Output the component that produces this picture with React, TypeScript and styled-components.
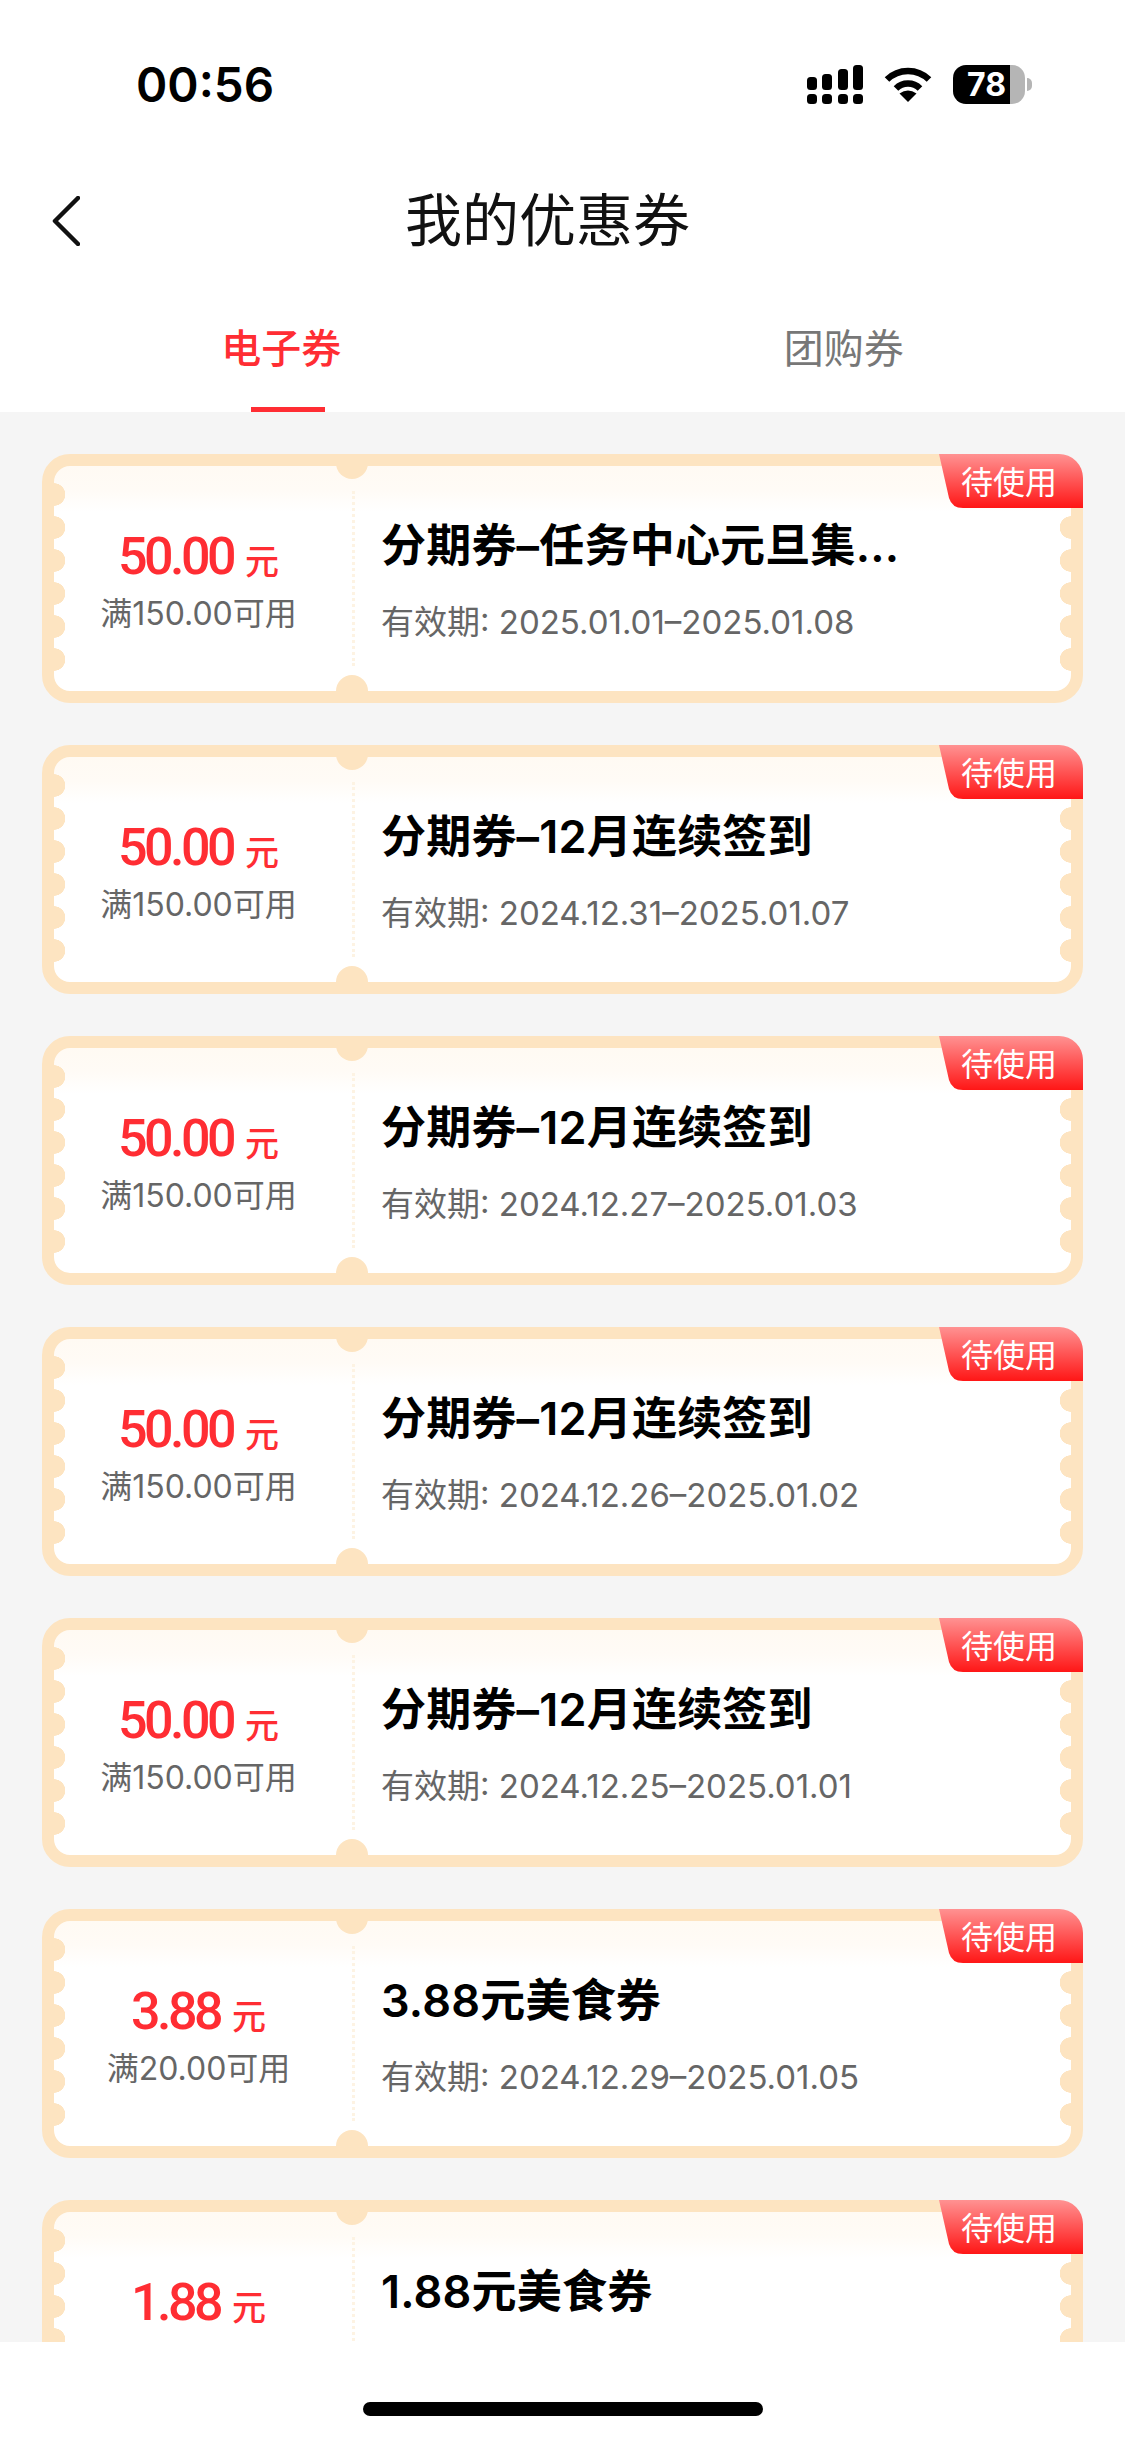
import React from 'react';
import styled, { createGlobalStyle } from 'styled-components';

interface Coupon {
  price: string;
  limit?: string;
  title: string;
  date?: string;
}

const coupons: Coupon[] = [
  { price: '50.00', limit: '满150.00可用', title: '分期券–任务中心元旦集...', date: '有效期: 2025.01.01–2025.01.08' },
  { price: '50.00', limit: '满150.00可用', title: '分期券–12月连续签到', date: '有效期: 2024.12.31–2025.01.07' },
  { price: '50.00', limit: '满150.00可用', title: '分期券–12月连续签到', date: '有效期: 2024.12.27–2025.01.03' },
  { price: '50.00', limit: '满150.00可用', title: '分期券–12月连续签到', date: '有效期: 2024.12.26–2025.01.02' },
  { price: '50.00', limit: '满150.00可用', title: '分期券–12月连续签到', date: '有效期: 2024.12.25–2025.01.01' },
  { price: '3.88', limit: '满20.00可用', title: '3.88元美食券', date: '有效期: 2024.12.29–2025.01.05' },
  { price: '1.88', title: '1.88元美食券' },
];

function SignalIcon() {
  return (
    <svg width="56" height="39" viewBox="0 0 56 39" fill="#000">
      <rect x="0" y="29" width="10" height="10" rx="3.5" />
      <rect x="15" y="29" width="10" height="10" rx="3.5" />
      <rect x="31" y="29" width="10" height="10" rx="3.5" />
      <rect x="46" y="29" width="10" height="10" rx="3.5" />
      <rect x="0" y="12" width="10" height="13" rx="3.5" />
      <rect x="15" y="9" width="10" height="16" rx="3.5" />
      <rect x="31" y="4" width="10" height="21" rx="3.5" />
      <rect x="46" y="0" width="10" height="25" rx="3.5" />
    </svg>
  );
}

function WifiIcon() {
  return (
    <svg width="48" height="36" viewBox="0 0 48 36" fill="none">
      <path d="M3 13.5A30 30 0 0 1 45 13.5" stroke="#000" strokeWidth="6.5" />
      <path d="M12 22.5A17 17 0 0 1 36 22.5" stroke="#000" strokeWidth="6.5" />
      <path d="M24 36L15.5 27.5Q24 21.5 32.5 27.5Z" fill="#000" />
    </svg>
  );
}

function App() {
  return (
    <Page>
      <GlobalStyle />
      <StatusBar>
        <Time>00:56</Time>
        <StatusIcons>
          <SignalIcon />
          <WifiIcon />
          <Battery>78</Battery>
        </StatusIcons>
      </StatusBar>
      <NavBar>
        <svg width="28" height="50" viewBox="0 0 28 50" fill="none">
          <path d="M26 2L3 25L26 48" stroke="#111" strokeWidth="4.5" strokeLinecap="round" strokeLinejoin="round" />
        </svg>
        <NavTitle>我的优惠券</NavTitle>
      </NavBar>
      <Tabs>
        <Tab $active>电子券</Tab>
        <Tab>团购券</Tab>
      </Tabs>
      <List>
        {coupons.map((c, i) => (
          <Ticket key={i}>
            <Notch $edge="top" />
            <Notch $edge="bottom" />
            <Scallops $side="left" />
            <Scallops $side="right" />
            <Badge>待使用</Badge>
            <Amount>
              <PriceRow>
                <Price>{c.price}</Price>
                <Unit>元</Unit>
              </PriceRow>
              {c.limit && <Limit>{c.limit}</Limit>}
            </Amount>
            <Divider />
            <Info>
              <Title>{c.title}</Title>
              {c.date && <DateText>{c.date}</DateText>}
            </Info>
          </Ticket>
        ))}
      </List>
      <HomeBar>
        <HomeIndicator />
      </HomeBar>
    </Page>
  );
}

export default App;

const GlobalStyle = createGlobalStyle`
  html, body {
    margin: 0;
    padding: 0;
    background: #fff;
    font-family: Inter, "Noto Sans CJK SC", sans-serif;
  }
  * {
    box-sizing: border-box;
  }
`;

const Page = styled.div`
  display: flex;
  flex-direction: column;

  width: 1125px;
  height: 2439px;
  overflow: hidden;
  background: #fff;
`;

const StatusBar = styled.div`
  display: flex;
  justify-content: space-between;
  align-items: center;

  height: 168px;
  padding: 0 100px 0 136px;
`;

const Time = styled.div`
  font-size: 47.5px;
  font-weight: 600;
  color: #000;
`;

const StatusIcons = styled.div`
  display: flex;
  align-items: center;
  gap: 21px;
`;

const Battery = styled.div`
  position: relative;

  width: 72px;
  height: 39px;
  padding-left: 14px;
  border-radius: 13px;

  background: linear-gradient(90deg, #000 57px, #b5b5b5 57px);
  color: #fff;
  font-size: 32px;
  font-weight: 700;
  line-height: 39px;

  &::after {
    content: '';
    position: absolute;
    top: 13px;
    right: -7px;

    width: 5px;
    height: 13px;
    border-radius: 0 6px 6px 0;
    background: #b5b5b5;
  }
`;

const NavBar = styled.div`
  display: flex;
  align-items: center;

  height: 106px;
  padding-left: 52px;
`;

const NavTitle = styled.div`
  margin-left: 325px;

  font-size: 57px;
  font-weight: 400;
  line-height: 70px;
  color: #111;
`;

const Tabs = styled.div`
  display: flex;

  height: 138px;
`;

const Tab = styled.div<{ $active?: boolean }>`
  position: relative;
  flex: 1;

  padding-top: 50px;

  text-align: center;
  font-size: 40px;
  font-weight: ${(p) => (p.$active ? 500 : 400)};
  line-height: 50px;
  color: ${(p) => (p.$active ? '#ff2d33' : '#777')};

  &::after {
    content: '';
    display: ${(p) => (p.$active ? 'block' : 'none')};
    position: absolute;
    bottom: 0;
    left: 251px;

    width: 74px;
    height: 5px;
    background: #ff2d33;
  }
`;

const List = styled.div`
  display: flex;
  flex: 1;
  flex-direction: column;
  gap: 42px;

  min-height: 0;
  padding: 42px 42px 0;
  overflow: hidden;
  background: #f5f5f5;
`;

const Ticket = styled.div`
  position: relative;
  display: flex;
  flex-shrink: 0;

  height: 249px;
  border: 12px solid #fde4c1;
  border-radius: 28px;
  background: linear-gradient(#fffaf3, #fffbf6 24px, #fff 46px);
`;

const Notch = styled.div<{ $edge: 'top' | 'bottom' }>`
  position: absolute;
  left: 282px;
  ${(p) =>
    p.$edge === 'top'
      ? 'top: -12px; height: 25px; border-radius: 0 0 16px 16px;'
      : 'bottom: -12px; height: 28px; border-radius: 16px 16px 0 0;'}

  width: 32px;
  background: #fde4c1;
`;

const Scallops = styled.div<{ $side: 'left' | 'right' }>`
  position: absolute;
  top: 12px;
  ${(p) => p.$side}: 0;

  width: 12px;
  height: 198px;
  background: radial-gradient(circle at ${(p) => p.$side} center, #fde4c1 11px, transparent 11.5px) repeat-y;
  background-size: 12px 33px;
`;

const Badge = styled.div`
  position: absolute;
  top: -12px;
  right: -12px;

  width: 144px;
  height: 54px;
  padding-left: 22px;

  background: linear-gradient(#ff9292, #ff1616);
  clip-path: path('M0 0H120A24 24 0 0 1 144 24V54H24Q13 54 10 44Z');
  color: #fff;
  font-size: 32px;
  line-height: 57px;
`;

const Amount = styled.div`
  display: flex;
  flex-direction: column;
  align-items: center;

  width: 298px;
  padding: 61px 9px 0 0;
`;

const PriceRow = styled.div`
  display: flex;
  align-items: baseline;
  gap: 12px;
`;

const Price = styled.span`
  font-family: Roboto, sans-serif;
  font-size: 52px;
  font-weight: 500;
  line-height: 60px;
  letter-spacing: -3.5px;
  color: #ff2d33;
`;

const Unit = styled.span`
  font-size: 34px;
  font-weight: 500;
  color: #ff2d33;
`;

const Limit = styled.div`
  margin-top: 7px;

  font-size: 32px;
  line-height: 40px;
  color: #666;
`;

const Divider = styled.div`
  align-self: center;

  height: 175px;
  border-left: 3px dotted #fdf3e3;
`;

const Info = styled.div`
  display: flex;
  flex-direction: column;

  padding: 52px 0 0 26px;
`;

const Title = styled.div`
  font-size: 45px;
  font-weight: 600;
  line-height: 56px;
  letter-spacing: 0.2px;
  color: #000;
`;

const DateText = styled.div`
  margin-top: 27px;

  font-size: 33px;
  line-height: 42px;
  color: #666;
`;

const HomeBar = styled.div`
  flex-shrink: 0;

  height: 97px;
  padding: 60px 362px 0 363px;
  background: #fff;
`;

const HomeIndicator = styled.div`
  height: 14px;
  border-radius: 7px;
  background: #000;
`;
